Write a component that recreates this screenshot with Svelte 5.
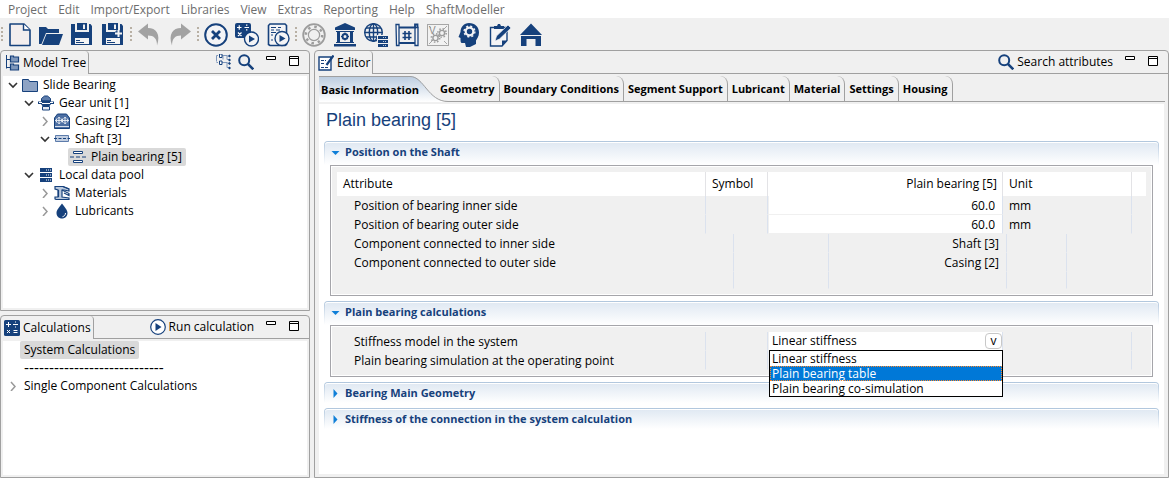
<script lang="ts">
	const menus = ['Project', 'Edit', 'Import/Export', 'Libraries', 'View', 'Extras', 'Reporting', 'Help', 'ShaftModeller'];

	const tools = [
		[['new', 'New'], ['open', 'Open'], ['save', 'Save'], ['saveas', 'Save as']],
		[['undo', 'Undo'], ['redo', 'Redo']],
		[['cancel', 'Cancel'], ['calcrun', 'Run calculation'], ['docrun', 'Run report']],
		[
			['bearing', 'Bearing'],
			['bank', 'Database'],
			['globe', 'Server'],
			['plan', 'Drawing'],
			['variant', 'Variants'],
			['head', 'Knowledge'],
			['notes', 'Notes'],
			['home', 'Home']
		]
	];

	const tree = [
		{ label: 'Slide Bearing', icon: 'folder', level: 0, state: 'open' },
		{ label: 'Gear unit [1]', icon: 'gear', level: 1, state: 'open' },
		{ label: 'Casing [2]', icon: 'casing', level: 2, state: 'closed' },
		{ label: 'Shaft [3]', icon: 'shaft', level: 2, state: 'open' },
		{ label: 'Plain bearing [5]', icon: 'plain', level: 3, state: '' },
		{ label: 'Local data pool', icon: 'pool', level: 1, state: 'open' },
		{ label: 'Materials', icon: 'material', level: 2, state: 'closed' },
		{ label: 'Lubricants', icon: 'drop', level: 2, state: 'closed' }
	];
	let selectedNode = $state('Plain bearing [5]');

	const tabs = ['Basic Information', 'Geometry', 'Boundary Conditions', 'Segment Support', 'Lubricant', 'Material', 'Settings', 'Housing'];
	let activeTab = $state('Basic Information');

	const positions = [
		{ id: 'inner', label: 'Position of bearing inner side', value: '60.0', unit: 'mm' },
		{ id: 'outer', label: 'Position of bearing outer side', value: '60.0', unit: 'mm' }
	];
	const connections = [
		{ label: 'Component connected to inner side', value: 'Shaft [3]' },
		{ label: 'Component connected to outer side', value: 'Casing [2]' }
	];

	const models = ['Linear stiffness', 'Plain bearing table', 'Plain bearing co-simulation'];
	let model = $state('Linear stiffness');
	let highlighted = $state('Plain bearing table');
	let listOpen = $state(true);

	function pick(name: string) {
		model = name;
		highlighted = name;
		listOpen = false;
	}
</script>

{#snippet toolIcon(name: string)}
	<svg class="tool-icon" viewBox="0 0 24 24" aria-hidden="true">
		{#if name === 'new'}
			<path d="M2 1h14l6 6v15.500H2z" fill="#f3eeee" stroke="#16417c" stroke-width="1.600" stroke-linejoin="round" />
			<path d="M15.500 1v6H22" fill="#fff" stroke="#16417c" stroke-width="1.400" />
		{:else if name === 'open'}
			<path d="M0 21V4h7l2 2h11v4H7L2.500 21z" fill="#16417c" />
			<path d="M7.500 11H24l-4 11H3z" fill="#16417c" />
		{:else if name === 'save' || name === 'saveas'}
			<path d="M1 1h4v8h14V1h1.500L22 3v19H1z" fill="#16417c" />
			<path d="M7 0h10v7H7z" fill="#16417c" />
			<path d="M5 1v7h14V1h-1.500v6h-11V1z" fill="#f0f0f0" />
			<path d="M13 1.500h2V6h-2z" fill="#f0f0f0" />
			<path d="M5 15h14v6H5z" fill="#f4f4f4" />
			<path d="M6 17.500h4M6 19.500h8" stroke="#16417c" />
			{#if name === 'saveas'}
				<path d="M14 10.500h6.500M17.250 7.250v6.500" stroke="#16417c" stroke-width="4" />
				<path d="M14 10.500h7M17.500 7v7" stroke="#f4f4f4" stroke-width="2" />
			{/if}
		{:else if name === 'undo'}
			<path d="M1 8.500l10-8V5c8 0 13 6 9 17.500 0-7-3-10-9-10v4z" fill="#a2a2a2" />
		{:else if name === 'redo'}
			<path d="M23 8.500l-10-8V5C5 5 0 11 4 22.500c0-7 3-10 9-10v4z" fill="#a2a2a2" />
		{:else if name === 'cancel'}
			<circle cx="12" cy="12" r="10.800" fill="#f4f4f6" stroke="#16417c" stroke-width="2" />
			<path d="M8 8l8 8M16 8l-8 8" stroke="#16417c" stroke-width="2.800" />
		{:else if name === 'calcrun'}
			<rect x="0" y="0" width="16" height="15" rx="2" fill="#16417c" />
			<path d="M2 4.500h4.500M4.250 2.250v4.500M9.500 4.500H14M3 9.500l3.500 3.500M6.500 9.500L3 13" stroke="#fff" stroke-width="1.200" />
			<path d="M11 2.200h1.400M11 6.800h1.400" stroke="#fff" stroke-width="1.200" />
			<circle cx="16.500" cy="16" r="7" fill="#f4f4f6" stroke="#16417c" stroke-width="1.400" />
			<path d="M14 12.500l6 3.500-6 3.500z" fill="#16417c" />
		{:else if name === 'docrun'}
			<path d="M2.500 2.500L4 1h15l1.500 1.500v19L19 22.500H4l-1.500-1z" fill="#f4f4f6" stroke="#16417c" stroke-width="1.600" />
			<path d="M5 4.500h5M12 4.500h3M5 7h3M10 7h4M5 9.500h5M5 12h2M5 17h2" stroke="#16417c" stroke-width="1.200" />
			<circle cx="16" cy="15.500" r="7" fill="#f4f4f6" stroke="#16417c" stroke-width="1.400" />
			<path d="M13.500 12l6 3.500-6 3.500z" fill="#16417c" />
		{:else if name === 'bearing'}
			<g fill="none" stroke="#9c9c9c">
				<circle cx="12" cy="12" r="10.800" stroke-width="1.800" />
				<circle cx="12" cy="12" r="5.600" stroke-width="1.200" />
				<circle cx="12" cy="12" r="8.200" stroke-width="2.400" stroke-dasharray="2.500 3.940" />
			</g>
		{:else if name === 'bank'}
			<path d="M12 0l10 4.500V7H2V4.500zM3 8h18v1h-1v10h1v1H3v-1h1V9H3zM1 21h22v2.500H1z" fill="#16417c" />
			<path d="M7 9h10v10H7z" fill="#f0f0f0" />
			<circle cx="12" cy="13.500" r="2.500" fill="none" stroke="#16417c" stroke-width="2" />
			<path d="M12 9.500v8M8 13.500h8" stroke="#16417c" stroke-width="1.200" stroke-dasharray="1.500 5" />
		{:else if name === 'globe'}
			<g fill="none" stroke="#16417c" stroke-width="1.400">
				<circle cx="9.500" cy="9.500" r="8.800" />
				<ellipse cx="9.500" cy="9.500" rx="4.200" ry="8.800" />
				<path d="M9.500 0.500v18M0.700 9.500h17.600M2 5h15M2 14h11" />
			</g>
			<path d="M13 12h11v12H13z" fill="#f0f0f0" />
			<path d="M14 13h10v3H14zM14 17h10v3H14zM14 21h10v3H14z" fill="#16417c" />
			<path d="M19 14.500h4M19 18.500h4M19 22.500h4" stroke="#b9c8dc" stroke-dasharray="1 1" />
		{:else if name === 'plan'}
			<path d="M1 1.500h3v21H1.500zM20 4.500h3v18h-3z" fill="#f4f4f6" stroke="#16417c" stroke-width="1.300" />
			<path d="M20 4.500v-3h2.500v3M4 4.500h17M4 20h16" fill="none" stroke="#16417c" stroke-width="1.800" />
			<path d="M10 8v9M14 8v9M7.500 10.500h9M7.500 14.500h9" stroke="#16417c" stroke-width="1.600" />
		{:else if name === 'variant'}
			<rect x="1.500" y="1.500" width="21" height="21" fill="#f2f2f2" stroke="#a6a6a6" />
			<path d="M3 21l5-5M16 8l5-5M3 3l2 2M18 18l3 3" stroke="#a6a6a6" />
			<text x="3" y="11" font-size="10" font-family="Liberation Sans, sans-serif" fill="#8c8c8c">V</text>
			<circle cx="16" cy="10" r="2.600" fill="none" stroke="#9c9c9c" stroke-width="1.400" />
			<circle cx="16" cy="10" r="4.200" fill="none" stroke="#9c9c9c" stroke-width="1.600" stroke-dasharray="1.500 1.800" />
			<circle cx="9.500" cy="15" r="2.600" fill="none" stroke="#9c9c9c" stroke-width="1.400" />
			<circle cx="9.500" cy="15" r="4.200" fill="none" stroke="#9c9c9c" stroke-width="1.600" stroke-dasharray="1.500 1.800" />
		{:else if name === 'head'}
			<path d="M12 0c6 0 10 4 10 9.500 0 4-2 6-3 8V21l-6 3H9l-1-4H5c-1.500 0-1.500-2-1.500-5L1.500 14 3.500 9C3.500 4 7 0 12 0z" fill="#16417c" />
			<circle cx="12.500" cy="8.500" r="3.800" fill="none" stroke="#f4f4f6" stroke-width="2.200" />
			<circle cx="12.500" cy="8.500" r="5.400" fill="none" stroke="#f4f4f6" stroke-width="1.400" stroke-dasharray="2.120 2.120" />
		{:else if name === 'notes'}
			<path d="M2.500 4.500h16.500v13l-5 5.500H2.500z" fill="#f4f4f6" stroke="#16417c" stroke-width="1.400" />
			<path d="M6 6V3h3l1-2h2l1 2h3v3zM19 17.500h-5V23z" fill="#16417c" />
			<path d="M20 2l3 3L11.500 16l-4.500 2L8.500 13z" fill="#16417c" stroke="#f4f4f6" stroke-width="0.700" />
		{:else if name === 'home'}
			<path d="M12 0.500L23 12H1zM2 13h20v10h-5.500v-7h-9v7H2z" fill="#16417c" />
		{/if}
	</svg>
{/snippet}

{#snippet smallIcon(name: string)}
	<svg class="small-icon" viewBox="0 0 16 16" aria-hidden="true">
		{#if name === 'tree'}
			<path d="M2.500 0v13.500M2.500 4.500h4M2.500 12.500h4" stroke="#16417c" fill="none" />
			<path d="M6.500 1h3v1h5v5h-8zM6.500 9h3v1h5v5h-8z" fill="#7e97bb" stroke="#16417c" stroke-width="1.200" />
		{:else if name === 'calc'}
			<rect width="16" height="16" rx="1.500" fill="#16417c" />
			<path d="M2 4.500h5M4.500 2v5M9 4.500h5M3 10l3 3M6 10l-3 3M9.500 10.500h4M9.500 12.500h4" stroke="#fff" />
			<path d="M11 2h1M11 7h1" stroke="#fff" />
		{:else if name === 'editor'}
			<path d="M1 2h12v13H1z" fill="#fff" stroke="#16417c" stroke-width="1.400" />
			<path d="M3 5.500h5M3 8.500h4M3 12.500h8" stroke="#16417c" stroke-dasharray="3 1" />
			<path d="M15.500 0.500L8.500 10" stroke="#16417c" stroke-width="2.200" />
		{:else if name === 'hierarchy'}
			<path d="M2 1.500H0.500v6M5 1.500h6v4h2M5 8.500h6v5h2M2 8.500H0.500M7 1.500v4M11 2h3M11 9h3" fill="none" stroke="#7e97bb" />
			<path d="M3.500 0v3.500H6V0zM3.500 7v3.500H6V7z" fill="#fff" stroke="#16417c" />
			<path d="M12 2l1.500-1.500L15 2l-1.500 1.500zM12 6l1.500-1.500L15 6l-1.500 1.500zM12 9.500L13.500 8 15 9.500 13.500 11zM12 14l1.500-1.500L15 14l-1.500 1.500z" fill="#16417c" />
		{:else if name === 'search'}
			<circle cx="6.200" cy="6.200" r="5" fill="none" stroke="#16417c" stroke-width="2" />
			<path d="M9.800 9.800l5.500 5.500" stroke="#16417c" stroke-width="2.600" />
		{:else if name === 'play'}
			<circle cx="8" cy="8" r="7.300" fill="#fff" stroke="#16417c" stroke-width="1.200" />
			<path d="M5.500 4l6 4-6 4z" fill="#16417c" />
		{:else if name === 'folder'}
			<path d="M0.500 14.500v-12h6l1 2h8v10z" fill="#8ea3c4" stroke="#16417c" />
		{:else if name === 'gear'}
			<path d="M3.500 6V3.500L6.500 1h3l3 2.500V6z" fill="#5d7cab" stroke="#16417c" />
			<path d="M0 6.500h3l1-1h8l1 1h3v2.500h-3L11.500 11h-7L3 9H0z" fill="#16417c" />
			<path d="M1 7.500h3M12 7.500h3M4 8.500h8" stroke="#fff" />
			<path d="M4.500 11.500h7V15h-7z" fill="#e4eaf3" stroke="#16417c" />
		{:else if name === 'casing'}
			<path d="M0.500 15.500V5l3-4h9l3 4v10.500z" fill="#4d6fa3" stroke="#16417c" />
			<path d="M1 13.500h14" stroke="#d6dfeb" />
			<circle cx="5" cy="7.500" r="2.800" fill="none" stroke="#fff" stroke-dasharray="2 1" />
			<circle cx="11" cy="7.500" r="2.800" fill="none" stroke="#fff" stroke-dasharray="2 1" />
			<path d="M1 7.500h14M5 4v7M11 4v7" stroke="#fff" stroke-width="0.800" />
		{:else if name === 'shaft'}
			<path d="M1.500 4.500h13v6h-13z" fill="#c3cfe1" stroke="#5d7cab" />
			<path d="M0 7.500h16" stroke="#16417c" stroke-dasharray="3 1.500" />
		{:else if name === 'plain'}
			<path d="M3.500 2.500h9v2h-9zM3.500 11.500h9v2h-9z" fill="#fff" stroke="#16417c" />
			<path d="M0 8h4M6 8h4M12 8h4" stroke="#16417c" />
		{:else if name === 'pool'}
			<path d="M2 1h12v4H2zM2 6h12v4H2zM2 11h12v4H2z" fill="#16417c" />
			<path d="M8 3h5M8 8h5M8 13h5" stroke="#fff" stroke-dasharray="1 1" />
		{:else if name === 'material'}
			<path d="M1 1.500h8l6 2.500v2l-5-1H8v7l7 1v1.500H2L1 14v-2h3V5L1 4z" fill="#b9c8dc" stroke="#16417c" stroke-width="1.200" />
			<path d="M1 1.500h8l6 2.500M4.500 5v7M8 5l7 3.500v2L10 8" fill="none" stroke="#16417c" stroke-width="1.200" />
		{:else if name === 'drop'}
			<path d="M8 0.500c2.500 3.500 5.500 6.500 5.500 9.500 0 3.300-2.500 5.500-5.500 5.500S2.500 13.300 2.500 10C2.500 7 5.500 4 8 0.500z" fill="#16417c" />
			<path d="M11.500 10c0 2-1.200 3.200-3 3.700" fill="none" stroke="#fff" />
		{/if}
	</svg>
{/snippet}

{#snippet windowButtons()}
	<button class="win" type="button" aria-label="Minimize">
		<svg viewBox="0 0 11 11"><path d="M0.500 0.500h9v3h-9z" fill="#fff" stroke="#000" /></svg>
	</button>
	<button class="win" type="button" aria-label="Maximize">
		<svg viewBox="0 0 11 11"><path d="M0.500 0.500h9v9h-9zM0.500 2.500h9" fill="#fff" stroke="#000" /></svg>
	</button>
{/snippet}

{#snippet chevron(state: string)}
	<svg class="chevron" viewBox="0 0 10 10" aria-hidden="true">
		{#if state === 'open'}
			<path d="M1 3l4 4 4-4" fill="none" stroke="#333" stroke-width="1.600" />
		{:else if state === 'closed'}
			<path d="M3 1l4 4.500L3 10" fill="none" stroke="#999" stroke-width="1.500" />
		{/if}
	</svg>
{/snippet}

{#snippet sectionHead(title: string, open: boolean)}
	<button class="section-head" class:open type="button" aria-expanded={open}>
		<svg viewBox="0 0 9 9" aria-hidden="true">
			<path d={open ? 'M0.500 3h8L4.500 7z' : 'M2.500 0L6.500 4.500l-4 4.500z'} fill="#0f7fd8" />
		</svg>
		{title}
	</button>
{/snippet}

<div class="app">
	<nav class="menubar">
		{#each menus as menu}
			<button type="button">{menu}</button>
		{/each}
	</nav>

	<div class="toolbar">
		{#each tools as group}
			<span class="grip"></span>
			{#each group as [name, label]}
				<button type="button" aria-label={label}>{@render toolIcon(name)}</button>
			{/each}
		{/each}
	</div>

	<main class="workbench">
		<div class="side">
			<section class="panel tree-panel">
				<header class="panel-head">
					<div class="panel-tab">{@render smallIcon('tree')}Model Tree</div>
					<div class="panel-actions">
						<button class="action" type="button" aria-label="Show hierarchy">{@render smallIcon('hierarchy')}</button>
						<button class="action" type="button" aria-label="Search">{@render smallIcon('search')}</button>
						{@render windowButtons()}
					</div>
				</header>
				<ul class="list">
					{#each tree as node}
						<li class="level-{node.level}">
							{@render chevron(node.state)}
							<button
								class="node"
								class:selected={node.label === selectedNode}
								type="button"
								onclick={() => (selectedNode = node.label)}
							>
								{@render smallIcon(node.icon)}{node.label}
							</button>
						</li>
					{/each}
				</ul>
			</section>

			<section class="panel calc-panel">
				<header class="panel-head">
					<div class="panel-tab">{@render smallIcon('calc')}Calculations</div>
					<div class="panel-actions">
						<button class="action" type="button">{@render smallIcon('play')}Run calculation</button>
						{@render windowButtons()}
					</div>
				</header>
				<ul class="list">
					<li>{@render chevron('')}<button class="node plain selected" type="button">System Calculations</button></li>
					<li>{@render chevron('')}<span class="node plain divider">----------------------------</span></li>
					<li>{@render chevron('closed')}<button class="node plain" type="button">Single Component Calculations</button></li>
				</ul>
			</section>
		</div>

		<section class="panel editor">
			<header class="panel-head">
				<div class="panel-tab">{@render smallIcon('editor')}Editor</div>
				<div class="panel-actions">
					<button class="action" type="button">{@render smallIcon('search')}Search attributes</button>
					{@render windowButtons()}
				</div>
			</header>

			<div class="tabs" role="tablist">
				{#each tabs as tab}
					<button
						class="tab"
						class:active={tab === activeTab}
						type="button"
						role="tab"
						aria-selected={tab === activeTab}
						onclick={() => (activeTab = tab)}
					>
						{#if tab === activeTab}
							<svg class="curve" viewBox="0 0 40 26" aria-hidden="true">
								<defs>
									<linearGradient id="tab-fill" x1="0" y1="0" x2="0" y2="1">
										<stop offset="0" stop-color="#bccde0" />
										<stop offset="1" stop-color="#fff" />
									</linearGradient>
								</defs>
								<path d="M0 0h2c14 0 18 25 38 25.500V26H0z" fill="url(#tab-fill)" />
								<path d="M0 0.500h2c14 0 18 25 38 25" fill="none" stroke="#a0a0a0" />
							</svg>
						{/if}
						<span>{tab}</span>
					</button>
				{/each}
			</div>

			<div class="form">
				<h1>Plain bearing [5]</h1>

				{@render sectionHead('Position on the Shaft', true)}
				<div class="box">
					<table>
						<colgroup>
							<col /><col class="c-symbol" /><col class="c-value" /><col class="c-unit" /><col class="c-rest" />
						</colgroup>
						<thead>
							<tr>
								<th>Attribute</th>
								<th>Symbol</th>
								<th class="num">Plain bearing [5]</th>
								<th>Unit</th>
								<th class="end"></th>
							</tr>
						</thead>
						<tbody>
							{#each positions as row}
								<tr>
									<td class="name"><label for={row.id}>{row.label}</label></td>
									<td></td>
									<td class="field"><input id={row.id} type="text" value={row.value} /></td>
									<td>{row.unit}</td>
									<td class="end"></td>
								</tr>
							{/each}
						</tbody>
					</table>
					<table>
						<colgroup>
							<col /><col class="d-symbol" /><col class="d-value" /><col class="d-unit" /><col class="d-rest" />
						</colgroup>
						<tbody>
							{#each connections as row}
								<tr>
									<td class="name">{row.label}</td>
									<td></td>
									<td class="num">{row.value}</td>
									<td></td>
									<td class="end"></td>
								</tr>
							{/each}
							<tr class="blank"><td></td><td></td><td></td><td></td><td class="end"></td></tr>
						</tbody>
					</table>
				</div>

				{@render sectionHead('Plain bearing calculations', true)}
				<div class="box">
					<table>
						<colgroup>
							<col /><col class="c-symbol" /><col class="c-value" /><col class="c-unit" /><col class="c-rest" />
						</colgroup>
						<tbody>
							<tr>
								<td class="name"><label for="model">Stiffness model in the system</label></td>
								<td></td>
								<td class="field">
									<div class="combo">
										<select id="model" bind:value={model}>
											{#each models as name}
												<option>{name}</option>
											{/each}
										</select>
										<button class="drop" type="button" aria-label="Toggle list" onclick={() => (listOpen = !listOpen)}>v</button>
										{#if listOpen}
											<ul class="options">
												{#each models as name}
													<li>
														<button type="button" class:highlighted={name === highlighted} onclick={() => pick(name)}>{name}</button>
													</li>
												{/each}
											</ul>
										{/if}
									</div>
								</td>
								<td></td>
								<td class="end"></td>
							</tr>
							<tr>
								<td class="name">Plain bearing simulation at the operating point</td>
								<td></td>
								<td></td>
								<td></td>
								<td class="end"></td>
							</tr>
						</tbody>
					</table>
				</div>

				{@render sectionHead('Bearing Main Geometry', false)}
				{@render sectionHead('Stiffness of the connection in the system calculation', false)}
			</div>
		</section>
	</main>
</div>

<style>
	:global(body) {
		background: #f0f0f0;
	}

	.app {
		display: flex;
		flex-direction: column;
		min-height: 100vh;
		background: #f0f0f0;
		color: #000;
		font: 12px/16px 'Open Sans', 'Noto Sans', sans-serif;
	}

	.app * {
		box-sizing: border-box;
	}

	button,
	input,
	select {
		font: inherit;
		color: inherit;
		background: none;
		border: 0;
		margin: 0;
		padding: 0;
		text-align: left;
		white-space: nowrap;
	}

	ul {
		list-style: none;
		margin: 0;
		padding: 0;
	}

	svg {
		display: block;
		flex: none;
	}

	.menubar {
		display: flex;
		gap: 11px;
		height: 18px;
		padding: 2px 8px 0;
		background: #fff;
		color: #6d6d6d;
	}

	.toolbar {
		display: flex;
		height: 32px;
		align-items: center;
	}

	.toolbar button {
		padding: 2px 4px 0 3px;
	}

	.tool-icon {
		width: 24px;
		height: 24px;
	}

	.small-icon {
		width: 16px;
		height: 16px;
	}

	.grip {
		width: 2px;
		height: 14px;
		margin: 0 2px 0 1px;
		background: repeating-linear-gradient(#b8b0a4 0 2px, transparent 2px 4px);
	}

	.workbench {
		flex: 1;
		display: grid;
		grid-template-columns: 310px 1fr;
		gap: 4px;
	}

	.side {
		display: flex;
		flex-direction: column;
		gap: 4px;
	}

	.panel {
		display: flex;
		flex-direction: column;
		border: 1px solid #a0a0a0;
		border-radius: 4px 4px 0 0;
	}

	.tree-panel {
		flex: 1;
	}

	.calc-panel {
		height: 163px;
	}

	.panel-head {
		display: flex;
		height: 23px;
	}

	.panel-tab {
		display: flex;
		align-items: center;
		gap: 3px;
		padding: 0 2px 0 3px;
		border-right: 1px solid #a0a0a0;
		border-radius: 0 4px 0 0;
	}

	.panel-actions {
		flex: 1;
		display: flex;
		justify-content: flex-end;
		align-items: center;
		gap: 12px;
		padding: 0 9px 1px 0;
		border-bottom: 1px solid #a0a0a0;
	}

	.action {
		display: flex;
		align-items: center;
		gap: 3px;
	}

	.action + .action {
		margin-left: -6px;
	}

	.win {
		width: 11px;
		height: 11px;
	}

	.list {
		flex: 1;
		margin: 2px;
		background: #fff;
	}

	.list li {
		display: flex;
		align-items: center;
		gap: 4px;
		height: 18px;
		padding-left: 5px;
	}

	.list .level-1 {
		padding-left: 21px;
	}

	.list .level-2 {
		padding-left: 37px;
	}

	.list .level-3 {
		padding-left: 53px;
	}

	.chevron {
		width: 10px;
		height: 10px;
	}

	.node {
		display: flex;
		align-items: center;
		gap: 5px;
		height: 18px;
		padding: 0 4px 0 0;
		border-radius: 2px;
	}

	.level-3 .node {
		padding-left: 2px;
		margin-left: -2px;
	}

	.node.plain {
		padding: 0 4px;
		margin-left: -2px;
	}

	.divider {
		font: 15px/18px 'Liberation Sans', Arial, sans-serif;
	}

	.selected {
		background: #d9d9d9;
	}

	.tabs {
		display: flex;
		height: 26px;
		margin: 2px 3px 0 4px;
		border-bottom: 1px solid #a0a0a0;
		font-size: 11px;
		font-weight: 700;
	}

	.tab {
		padding: 1px 4px 0;
		border-right: 1px solid #a0a0a0;
		border-radius: 0 8px 0 0;
	}

	.tab.active {
		position: relative;
		height: 26px;
		padding: 1px 17px 0 2px;
		border-right: 0;
		border-radius: 0;
	}

	.tab.active::before {
		content: '';
		position: absolute;
		inset: 0 28px 0 0;
		border-top: 1px solid #a0a0a0;
		background: linear-gradient(#bccde0, #fff);
	}

	.tab.active span {
		position: relative;
	}

	.curve {
		position: absolute;
		top: 0;
		right: -12px;
		width: 40px;
		height: 26px;
	}

	.form {
		flex: 1;
		display: flex;
		flex-direction: column;
		margin: 2px 4px 3px;
		padding: 4px 5px 0;
		background: #fff;
	}

	h1 {
		margin: 0 0 9px;
		padding-left: 2px;
		color: #16417c;
		font: 18px/24px 'Liberation Sans', Arial, sans-serif;
	}

	.section-head {
		display: flex;
		align-items: center;
		gap: 5px;
		height: 21px;
		margin-bottom: 5px;
		padding-left: 6px;
		border: 1px solid transparent;
		border-bottom: 0;
		border-radius: 4px 4px 0 0;
		background:
			linear-gradient(#dfe8f2, #fff) padding-box,
			linear-gradient(#b0c6dd, #fff) border-box;
		box-shadow: inset 0 1px #fff;
		color: #16417c;
		font-size: 11px;
		font-weight: 700;
	}

	.section-head.open {
		height: 24px;
		margin-bottom: 0;
		padding-bottom: 3px;
	}

	.section-head svg {
		width: 9px;
		height: 9px;
	}

	.box {
		margin: 0 6px 5px;
		padding: 6px;
		border: 1px solid #a5a5aa;
		outline: 1px solid #fff;
		outline-offset: -2px;
		background: #f0f0f0;
	}

	table {
		width: 100%;
		table-layout: fixed;
		border-collapse: separate;
		border-spacing: 0;
	}

	.c-symbol {
		width: 62px;
	}

	.c-value {
		width: 235px;
	}

	.c-unit {
		width: 129px;
	}

	.c-rest {
		width: 14px;
	}

	.d-symbol {
		width: 95px;
	}

	.d-value {
		width: 178px;
	}

	.d-unit {
		width: 60px;
	}

	.d-rest {
		width: 79px;
	}

	th {
		height: 24px;
		padding: 0 5px 0 6px;
		border-right: 1px solid #e3e3e6;
		background: #fff;
		font-weight: 400;
		text-align: left;
	}

	td {
		height: 19px;
		padding: 2px 7px 0 6px;
		border-right: 1px solid #dbe2ee;
		border-bottom: 1px solid #f0f0f0;
	}

	.name {
		padding-left: 17px;
	}

	.num {
		text-align: right;
	}

	.end {
		border-right: 0;
		padding: 0;
	}

	.blank td {
		height: 17px;
		padding: 0;
	}

	.field {
		padding: 0 0 0 1px;
	}

	.field input {
		display: block;
		width: 100%;
		height: 18px;
		padding: 1px 7px 0 0;
		background: #fff;
		text-align: right;
	}

	.combo {
		position: relative;
		display: flex;
		height: 18px;
		background: #fff;
	}

	.combo select {
		flex: 1;
		appearance: none;
		padding-left: 3px;
		line-height: 16px;
	}

	.drop {
		width: 17px;
		height: 16px;
		margin: 1px 0;
		border: 1px solid #c8c8c8;
		border-radius: 4px;
		line-height: 14px;
		text-align: center;
	}

	.options {
		position: absolute;
		top: 18px;
		left: 0;
		right: -1px;
		z-index: 1;
		border: 1px solid #000;
		background: #fff;
	}

	.options button {
		display: block;
		width: 100%;
		height: 15px;
		padding-left: 2px;
		line-height: 15px;
	}

	.options .highlighted {
		background: #0078d7;
		color: #fff;
		outline: 1px dotted #ff8728;
		outline-offset: -1px;
	}
</style>
